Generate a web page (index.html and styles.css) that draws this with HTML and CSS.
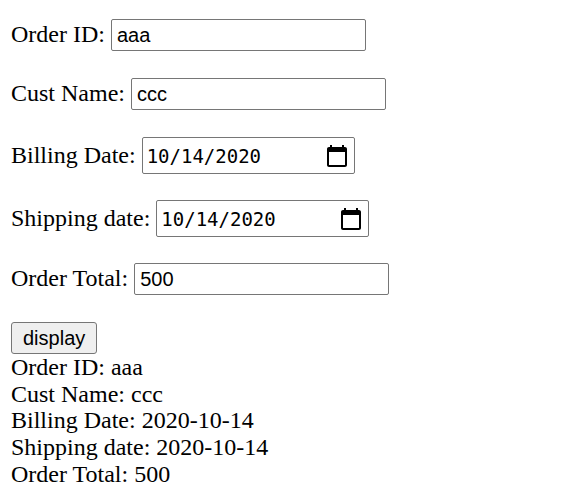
FILE: index.html
```html
<!DOCTYPE html>
<html lang="en">
<head>
<meta charset="utf-8">
<title>Order</title>
<link rel="stylesheet" href="styles.css">
</head>
<body>
<form class="form">
  <div class="row">
    <label class="label" for="oid">Order ID:</label>
    <input class="field" id="oid" type="text" value="aaa">
  </div>
  <div class="row">
    <label class="label" for="cname">Cust Name:</label>
    <input class="field" id="cname" type="text" value="ccc">
  </div>
  <div class="row row-date">
    <label class="label" for="bdate">Billing Date:</label>
    <div class="datefield" id="bdate">
      <span class="date-text">10/14/2020</span>
      <svg class="cal" width="24" height="24" viewBox="0 0 24 24" aria-hidden="true"><path d="M20 3h-1V1h-2v2H7V1H5v2H4c-1.1 0-2 .9-2 2v16c0 1.1.9 2 2 2h16c1.1 0 2-.9 2-2V5c0-1.1-.9-2-2-2zm0 18H4V8h16v13z" fill="#000"/></svg>
    </div>
  </div>
  <div class="row row-date">
    <label class="label" for="sdate">Shipping date:</label>
    <div class="datefield" id="sdate">
      <span class="date-text">10/14/2020</span>
      <svg class="cal" width="24" height="24" viewBox="0 0 24 24" aria-hidden="true"><path d="M20 3h-1V1h-2v2H7V1H5v2H4c-1.1 0-2 .9-2 2v16c0 1.1.9 2 2 2h16c1.1 0 2-.9 2-2V5c0-1.1-.9-2-2-2zm0 18H4V8h16v13z" fill="#000"/></svg>
    </div>
  </div>
  <div class="row">
    <label class="label" for="total">Order Total:</label>
    <input class="field" id="total" type="text" value="500">
  </div>
  <div class="actions">
    <button class="btn" type="button">display</button>
  </div>
</form>
<div class="output">
  <div>Order ID: aaa</div>
  <div>Cust Name: ccc</div>
  <div>Billing Date: 2020-10-14</div>
  <div>Shipping date: 2020-10-14</div>
  <div>Order Total: 500</div>
</div>
</body>
</html>
```

FILE: styles.css
```css
html, body {
  background: #fff;
}
body {
  margin: 12px 12px 12px 11px;
  font-family: "Liberation Serif", "Times New Roman", serif;
  font-size: 24px;
  line-height: 26.67px;
  color: #000;
}
.form {
  margin: 0;
  padding-top: 7px;
  display: flex;
  flex-direction: column;
  align-items: flex-start;
}
.row {
  display: flex;
  align-items: baseline;
  gap: 6px;
  margin-bottom: 27px;
}
.row-date {
  margin-bottom: 26px;
}
.label {
  white-space: nowrap;
}
.field {
  box-sizing: border-box;
  width: 255px;
  height: 32px;
  margin: 0;
  padding: 0 5px;
  border: 1px solid #767676;
  border-radius: 2px;
  font-family: "Liberation Sans", Arial, sans-serif;
  font-size: 20px;
  color: #000;
  background: #fff;
  outline: none;
}
.datefield {
  box-sizing: border-box;
  width: 213px;
  height: 37px;
  padding: 0 5px 0 4px;
  border: 1px solid #767676;
  border-radius: 2px;
  display: flex;
  align-items: center;
  justify-content: space-between;
  font-family: "DejaVu Sans Mono", "Liberation Mono", monospace;
  font-size: 19px;
  line-height: 24px;
  background: #fff;
}
.date-text {
  padding-top: 1px;
}
.cal {
  display: block;
  flex: none;
}
.actions {
  display: flex;
}
.btn {
  box-sizing: border-box;
  height: 32px;
  margin: 0;
  padding: 0 11px;
  border: 1px solid #767676;
  border-radius: 3px;
  background: #efefef;
  font-family: "Liberation Sans", Arial, sans-serif;
  font-size: 20px;
  color: #000;
}
.output {
  line-height: 26.67px;
}
```
